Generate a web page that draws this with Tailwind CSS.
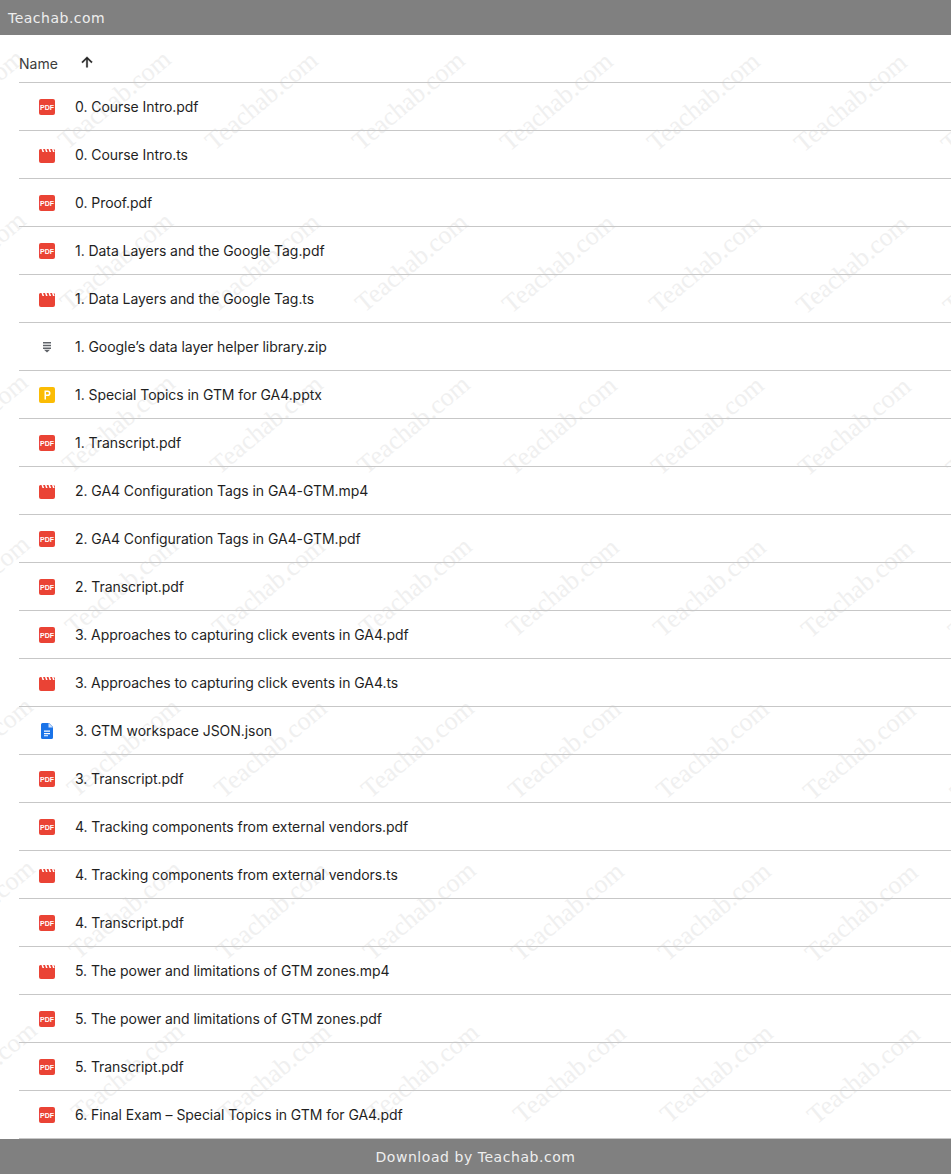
<!doctype html>
<html>
<head>
<meta charset="utf-8">
<script src="https://cdn.jsdelivr.net/npm/@tailwindcss/browser@4"></script>
</head>
<body class="bg-white">
<div class="relative w-[951px] h-[1174px] overflow-hidden font-['Inter',sans-serif]">
  <div id="marks" class="absolute inset-0 pointer-events-none"></div>
  <div class="relative h-[35px] bg-[#808080] flex items-center pl-2 text-sm tracking-[0.5px] text-[#eeeeee] font-['DejaVu_Sans',sans-serif]">Teachab.com</div>
  <div class="relative pl-[19px]">
    <div class="h-[48px] flex items-center pt-[10px] border-b border-[#c7c7c7] text-sm text-[#3c3c3c]">
      <span class="w-[60px]">Name</span>
      <svg class="w-4 h-4 -translate-y-0.5" viewBox="0 0 24 24" fill="#1f1f1f" stroke="#1f1f1f" stroke-width="0.6"><path d="M4 12l1.41 1.41L11 7.83V20h2V7.83l5.58 5.59L20 12l-8-8-8 8z"/></svg>
    </div>
    <div id="rows"></div>
  </div>
  <div class="absolute left-0 bottom-0 w-full h-[35px] bg-[#808080] flex items-center justify-center text-sm tracking-[0.55px] text-[#eeeeee] font-['DejaVu_Sans',sans-serif]">Download by Teachab.com</div>
</div>

<template id="pdf"><svg class="w-4 h-4" viewBox="0 0 16 16"><rect width="16" height="16" rx="2" fill="#ea4335"/><text x="8" y="10.500" text-anchor="middle" font-size="7" font-weight="700" fill="#fff" font-family="Liberation Sans, sans-serif">PDF</text></svg></template>
<template id="video"><svg class="w-4 h-4" viewBox="0 0 16 16"><path d="M0 3.500A1.500 1.500 0 0 1 1.500 2H14.500A1.500 1.500 0 0 1 16 3.500V14a2 2 0 0 1-2 2H2a2 2 0 0 1-2-2z" fill="#ea4335"/><path d="M2.500 2h1.600l1 3H3.500zM6 2h1.600l1 3H7zM9.500 2h1.600l1 3h-1.600zM13 2h1.600l1 3H14z" fill="#fff"/></svg></template>
<template id="zip"><svg class="w-4 h-4" viewBox="0 0 16 16" fill="#5f6368"><path d="M4 3h8v1.500H4zM4 5.700h8v1.500H4zM4 8.400h8v1.500H4zM5 10.800h6L8 13.500z"/></svg></template>
<template id="slides"><svg class="w-4 h-4" viewBox="0 0 16 16"><rect width="16" height="16" rx="2" fill="#fbbc04"/><path fill-rule="evenodd" d="M5.500 3.500h3.200a2.800 2.800 0 0 1 0 5.600H7V12.500H5.500zM7 5v2.600h1.600a1.300 1.300 0 0 0 0-2.600z" fill="#fff"/></svg></template>
<template id="doc"><svg class="w-4 h-4" viewBox="0 0 16 16"><path d="M3.500 0H10l4 4v10.500a1.500 1.500 0 0 1-1.500 1.500h-9A1.500 1.500 0 0 1 2 14.500V1.500A1.500 1.500 0 0 1 3.500 0z" fill="#1a73e8"/><path d="M9.500 0v4.500H14z" fill="#d2e3fc"/><path d="M5 7.500h6V8.800H5zM5 10h6v1.300H5zM5 12.300h4v.9H5z" fill="#fff"/></svg></template>

<script>
  const files = [
    ['pdf', '0. Course Intro.pdf'],
    ['video', '0. Course Intro.ts'],
    ['pdf', '0. Proof.pdf'],
    ['pdf', '1. Data Layers and the Google Tag.pdf'],
    ['video', '1. Data Layers and the Google Tag.ts'],
    ['zip', '1. Google’s data layer helper library.zip'],
    ['slides', '1. Special Topics in GTM for GA4.pptx'],
    ['pdf', '1. Transcript.pdf'],
    ['video', '2. GA4 Configuration Tags in GA4-GTM.mp4'],
    ['pdf', '2. GA4 Configuration Tags in GA4-GTM.pdf'],
    ['pdf', '2. Transcript.pdf'],
    ['pdf', '3. Approaches to capturing click events in GA4.pdf'],
    ['video', '3. Approaches to capturing click events in GA4.ts'],
    ['doc', '3. GTM workspace JSON.json'],
    ['pdf', '3. Transcript.pdf'],
    ['pdf', '4. Tracking components from external vendors.pdf'],
    ['video', '4. Tracking components from external vendors.ts'],
    ['pdf', '4. Transcript.pdf'],
    ['video', '5. The power and limitations of GTM zones.mp4'],
    ['pdf', '5. The power and limitations of GTM zones.pdf'],
    ['pdf', '5. Transcript.pdf'],
    ['pdf', '6. Final Exam – Special Topics in GTM for GA4.pdf']
  ];

  const rows = document.getElementById('rows');
  files.forEach(([type, name]) => {
    const row = document.createElement('div');
    row.className = 'h-[48px] flex items-center border-b border-[#c7c7c7] text-sm tracking-[-0.06px] text-[#1f1f1f]';
    const icon = document.createElement('div');
    icon.className = 'w-[56px] pl-5 flex items-center';
    icon.append(document.getElementById(type).content.cloneNode(true));
    const label = document.createElement('span');
    label.textContent = name;
    row.append(icon, label);
    rows.append(row);
  });

  // Водяные знаки
  const marks = document.getElementById('marks');
  for (let r = 0; r < 8; r++) {
    for (let c = -1; c < 7; c++) {
      const m = document.createElement('span');
      m.className = "absolute text-[26px] leading-none whitespace-nowrap text-[#f0f0f0] font-['Liberation_Serif',serif] -rotate-[40deg]";
      m.textContent = 'Teachab.com';
      m.style.left = (46 + c * 147.2 + r * 2.2) + 'px';
      m.style.top = (87 + r * 162 + c * 0.6) + 'px';
      marks.append(m);
    }
  }
</script>
</body>
</html>
